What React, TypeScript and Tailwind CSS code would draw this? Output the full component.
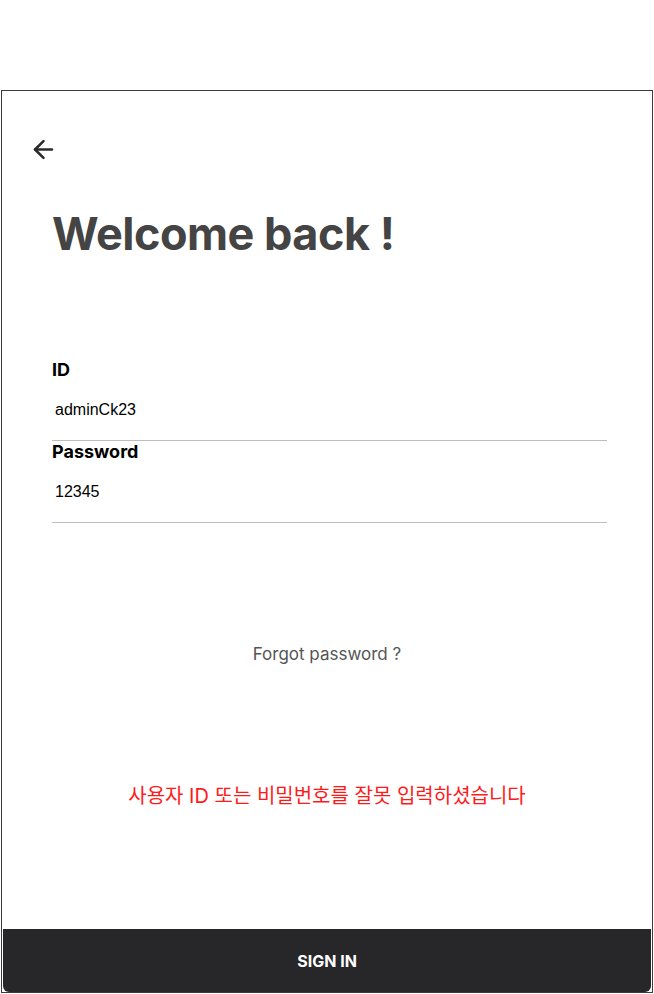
import { ArrowLeft } from 'lucide-react';

const inter = { fontFamily: 'Inter, "Noto Sans CJK KR", sans-serif' };

function Field({ label, value }: { label: string; value: string }) {
  return (
    <div className="border-b border-[#bdbdbd]">
      <div className="text-[18px] font-bold leading-[22px] text-black">{label}</div>
      <div
        className="pl-[3px] pt-[17px] pb-[19px] text-[16px] leading-[23px] text-black"
        style={{ fontFamily: '"Liberation Sans", Arial, sans-serif' }}
      >
        {value}
      </div>
    </div>
  );
}

export default function App() {
  return (
    <div className="min-h-[994px] bg-white pt-[90px]" style={inter}>
      <div className="ml-[1px] flex h-[903px] w-[652px] flex-col border border-[#3a3a3a] bg-white">
        <div className="pl-[27px] pt-[44px]">
          <ArrowLeft size={29} strokeWidth={2.1} className="text-[#2a2a2a]" />
        </div>
        <div className="pl-[50px] pr-[45px]">
          <h1 className="mt-[42px] text-[45px] font-bold leading-[56px] tracking-[-0.5px] text-[#444444]">
            Welcome back !
          </h1>
          <div className="mt-[97px] flex flex-col">
            <Field label="ID" value="adminCk23" />
            <Field label="Password" value="12345" />
          </div>
        </div>
        <div className="mt-[119px] text-center text-[17px] text-[#555555]">Forgot password ?</div>
        <div className="mt-[113px] text-center text-[20px] text-[#ff1a1a]">
          사용자 ID 또는 비밀번호를 잘못 입력하셨습니다
        </div>
        <div className="flex-1" />
        <button className="mx-[1px] mb-0 flex h-[63px] items-center justify-center rounded-b-[6px] bg-[#27272a] text-[16px] font-bold text-white">
          SIGN IN
        </button>
      </div>
    </div>
  );
}
